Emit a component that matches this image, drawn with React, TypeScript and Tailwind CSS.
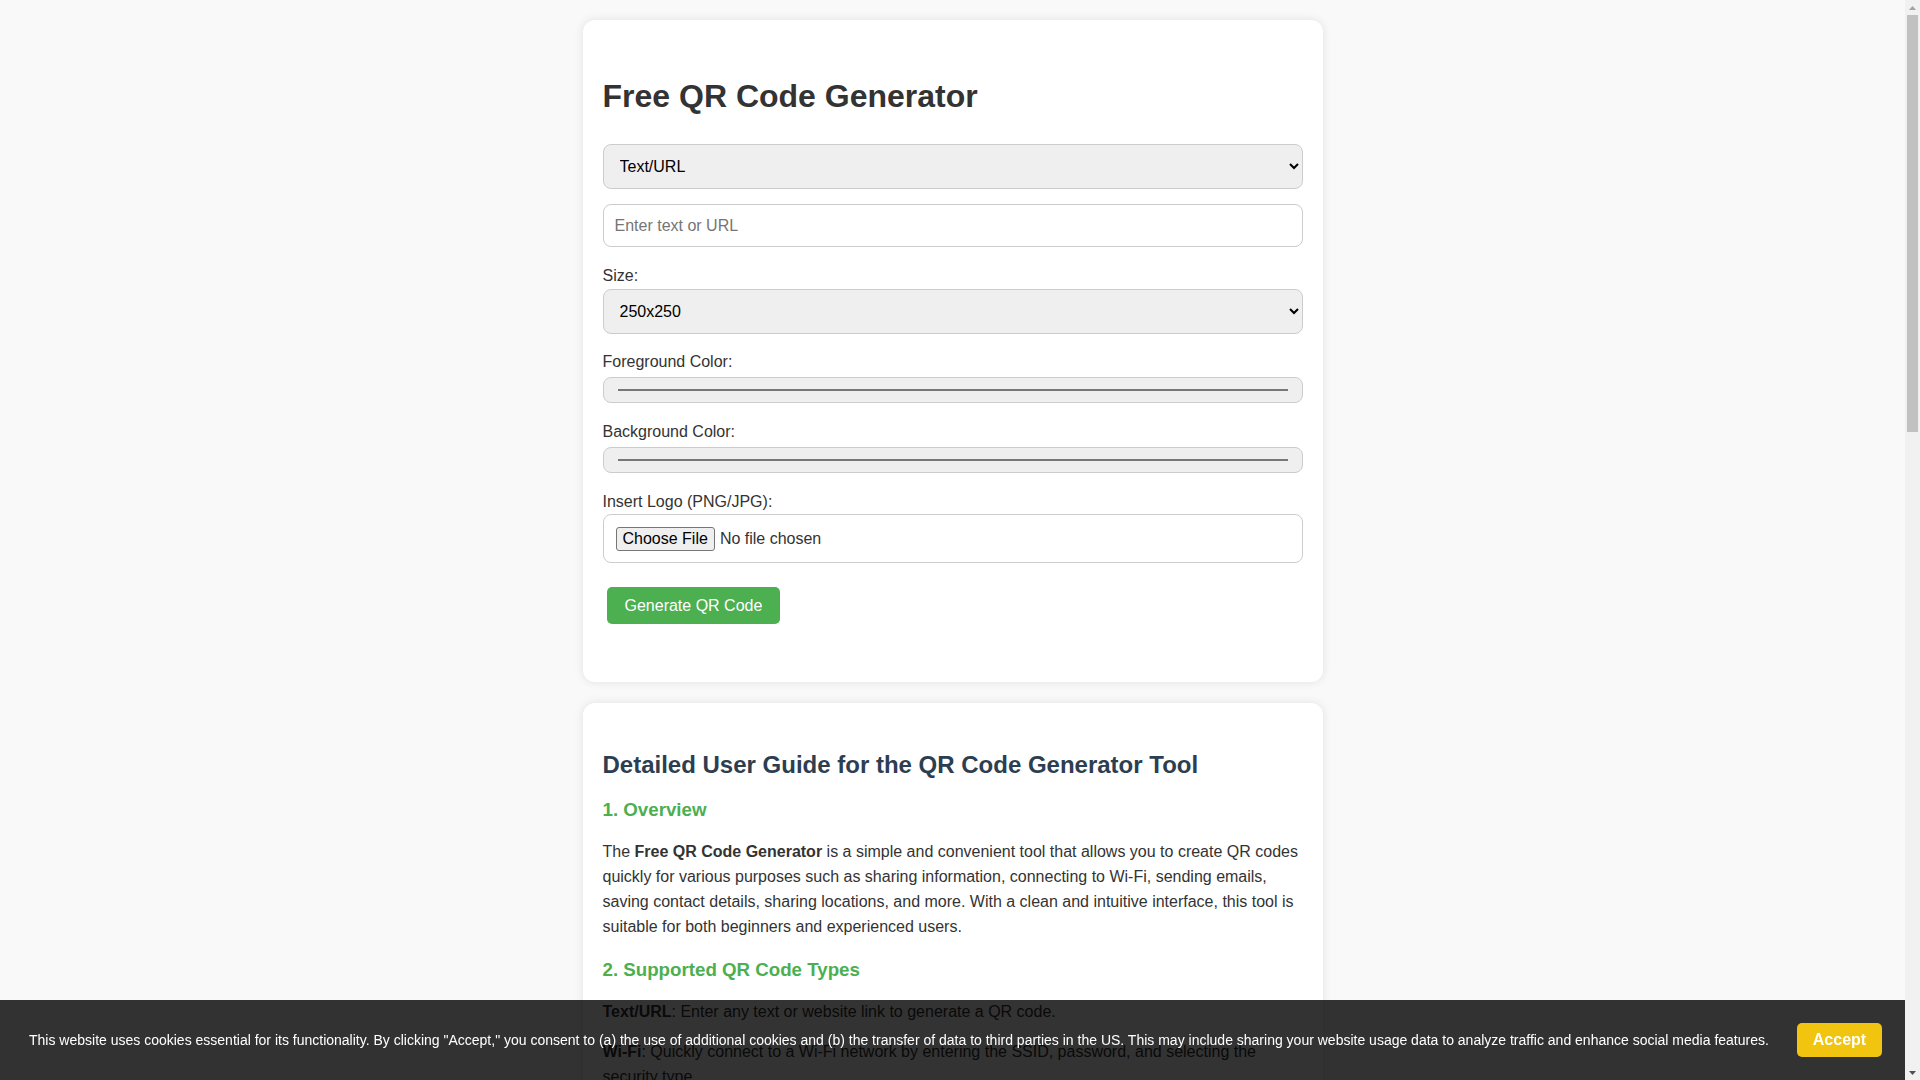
import React from "react";

type Item = { label?: string; text: string };
type Section = { title: string; items: Item[] };

const sections: Section[] = [
    {
        title: "2. Supported QR Code Types",
        items: [
            { label: "Text/URL", text: ": Enter any text or website link to generate a QR code." },
            { label: "Wi-Fi", text: ": Quickly connect to a Wi-Fi network by entering the SSID, password, and selecting the security type." },
            { label: "Email", text: ": Create a QR code that opens a new email with the recipient address, subject and message already filled in." },
            { label: "SMS", text: ": Generate a code that prepares a text message to a phone number with a predefined message." },
            { label: "Phone", text: ": Let people call a phone number instantly by scanning the QR code with their smartphone camera." },
            { label: "vCard (Contact)", text: ": Share your name, phone number, email, company and address so others can save your contact details in one tap." },
            { label: "Location", text: ": Enter latitude and longitude to share a place on the map, perfect for events, shops and meeting points." },
        ],
    },
    {
        title: "3. How to Generate a QR Code",
        items: [
            { label: "Step 1", text: ": Choose the type of QR code you want to create from the drop-down menu at the top of the tool." },
            { label: "Step 2", text: ": Fill in the required information, such as the website address, Wi-Fi details, email address or contact information." },
            { label: "Step 3", text: ": Select the size of your QR code and pick the foreground and background colors." },
            { label: "Step 4", text: ": Optionally, upload a logo in PNG or JPG format. The logo will be placed in the center of the QR code." },
            { label: "Step 5", text: ": Click the \"Generate QR Code\" button. Your QR code will appear below the form, ready to be scanned or downloaded." },
        ],
    },
    {
        title: "4. Customization Options",
        items: [
            { label: "Size", text: ": Choose from several preset sizes depending on where you plan to use the code." },
            { label: "Colors", text: ": Use a dark foreground on a light background so the code can be scanned easily." },
            { label: "Logo", text: ": Keep the logo small and simple so that it does not cover too much of the code." },
        ],
    },
    {
        title: "5. Conclusion",
        items: [
            { text: "The Free QR Code Generator makes it easy to create professional, customizable QR codes in just a few seconds. Whether you want to share a link, a Wi-Fi network or your contact details, this tool gives you everything you need in one simple page." },
        ],
    },
];

function GuideItem({ item, first }: { item: Item; first: boolean }) {
    return (
        <p className={`${first ? "mt-[18px]" : "mt-[15px]"} leading-[25px]`}>
            {item.label && <strong className="font-bold">{item.label}</strong>}
            {item.text}
        </p>
    );
}

function FieldLabel({ children, className }: { children: React.ReactNode; className: string }) {
    return <label className={`block leading-[18px] ${className}`}>{children}</label>;
}

function ColorField({ className }: { className: string }) {
    return (
        <div className={`flex h-[26px] items-center rounded-[8px] border border-[#ccc] bg-[#efefef] px-[14px] ${className}`}>
            <div className="h-[2px] w-full bg-[#777]" />
        </div>
    );
}

// classic browser scrollbar, drawn
function Scrollbar() {
    return (
        <div className="flex h-screen w-[15px] shrink-0 flex-col bg-[#f1f1f1]">
            <div className="flex h-[15px] items-center justify-center">
                <svg width="7" height="4" viewBox="0 0 7 4">
                    <path d="M3.5 0 L7 4 L0 4 Z" fill="#a3a3a3" />
                </svg>
            </div>
            <div className="flex-1 px-[2px]">
                <div className="h-[417px] bg-[#c1c1c1]" />
            </div>
            <div className="flex h-[15px] items-center justify-center">
                <svg width="7" height="4" viewBox="0 0 7 4">
                    <path d="M0 0 L7 0 L3.5 4 Z" fill="#505050" />
                </svg>
            </div>
        </div>
    );
}

export default function App() {
    return (
        <div className="flex h-screen overflow-hidden font-['Liberation_Sans',Arial,sans-serif] text-[16px] text-[#333]">
            <div className="h-screen flex-1 overflow-y-auto bg-[#f9f9f9] [scrollbar-width:none]">
                <div className="pt-[20px] pb-[20px]">
                    {/* Generator */}
                    <div className="mx-auto w-[740px] rounded-[12px] bg-white p-[20px] shadow-[0_0_10px_rgba(0,0,0,0.1)]">
                        <h1 className="mt-[37.5px] text-[32px] leading-[37px] font-bold text-[#333]">Free QR Code Generator</h1>

                        <select className="mt-[29.5px] block h-[45px] w-full rounded-[8px] border border-[#ccc] bg-[#efefef] pl-[12px] pr-[8px] text-black">
                            <option>Text/URL</option>
                            <option>Wi-Fi</option>
                            <option>Email</option>
                            <option>SMS</option>
                            <option>Phone</option>
                            <option>vCard</option>
                            <option>Location</option>
                        </select>

                        <input
                            type="text"
                            placeholder="Enter text or URL"
                            className="mt-[15px] block h-[43px] w-full rounded-[8px] border border-[#ccc] px-[11px] text-black placeholder:text-[#757575] outline-none"
                        />

                        <FieldLabel className="mt-[19.5px]">Size:</FieldLabel>
                        <select className="mt-[4.5px] block h-[45px] w-full rounded-[8px] border border-[#ccc] bg-[#efefef] pl-[12px] pr-[8px] text-black">
                            <option>250x250</option>
                            <option>150x150</option>
                            <option>500x500</option>
                            <option>1000x1000</option>
                        </select>

                        <FieldLabel className="mt-[19px]">Foreground Color:</FieldLabel>
                        <ColorField className="mt-[6px]" />

                        <FieldLabel className="mt-[20px]">Background Color:</FieldLabel>
                        <ColorField className="mt-[6px]" />

                        <FieldLabel className="mt-[20px]">Insert Logo (PNG/JPG):</FieldLabel>
                        <div className="mt-[3px] flex h-[49px] items-center rounded-[8px] border border-[#ccc] px-[12px]">
                            <span className="flex h-[24px] items-center rounded-[3px] border border-[#767676] bg-[#efefef] px-[6px] text-black">Choose File</span>
                            <span className="ml-[5px]">No file chosen</span>
                        </div>

                        <div className="mt-[24px] mb-[38px]">
                            <button className="ml-[4px] flex h-[37px] items-center rounded-[5px] bg-[#4caf50] px-[18px] text-white">Generate QR Code</button>
                        </div>
                    </div>

                    {/* Guide */}
                    <div className="mx-auto mt-[21px] w-[740px] rounded-[12px] bg-white p-[20px] pb-[40px] shadow-[0_0_10px_rgba(0,0,0,0.1)]">
                        <h2 className="mt-[28px] text-[24px] leading-[28px] font-bold text-[#2c3e50]">Detailed User Guide for the QR Code Generator Tool</h2>

                        <h3 className="mt-[20px] text-[18.72px] leading-[22px] font-bold text-[#4caf50]">1. Overview</h3>
                        <p className="mt-[17.5px] leading-[25px]">
                            The <strong className="font-bold">Free QR Code Generator</strong> is a simple and convenient tool that allows you to create QR codes quickly
                            for various purposes such as sharing information, connecting to Wi-Fi, sending emails, saving contact details, sharing locations, and more.
                            With a clean and intuitive interface, this tool is suitable for both beginners and experienced users.
                        </p>

                        {sections.map((s) => (
                            <div key={s.title}>
                                <h3 className="mt-[20px] text-[18.72px] leading-[22px] font-bold text-[#4caf50]">{s.title}</h3>
                                {s.items.map((item, i) => (
                                    <GuideItem key={i} item={item} first={i === 0} />
                                ))}
                            </div>
                        ))}
                    </div>
                </div>
            </div>

            <Scrollbar />

            {/* Cookie banner */}
            <div className="fixed right-[15px] bottom-0 left-0 z-50 flex h-[80px] items-center justify-between bg-[rgba(0,0,0,0.8)] pl-[29px] pr-[23px]">
                <p className="text-[14px] text-white">
                    This website uses cookies essential for its functionality. By clicking "Accept," you consent to (a) the use of additional cookies and (b) the
                    transfer of data to third parties in the US. This may include sharing your website usage data to analyze traffic and enhance social media
                    features.
                </p>
                <button className="ml-[20px] flex h-[34px] w-[85px] shrink-0 items-center justify-center rounded-[5px] bg-[#f1c40f] text-[16px] font-bold text-white">
                    Accept
                </button>
            </div>
        </div>
    );
}
